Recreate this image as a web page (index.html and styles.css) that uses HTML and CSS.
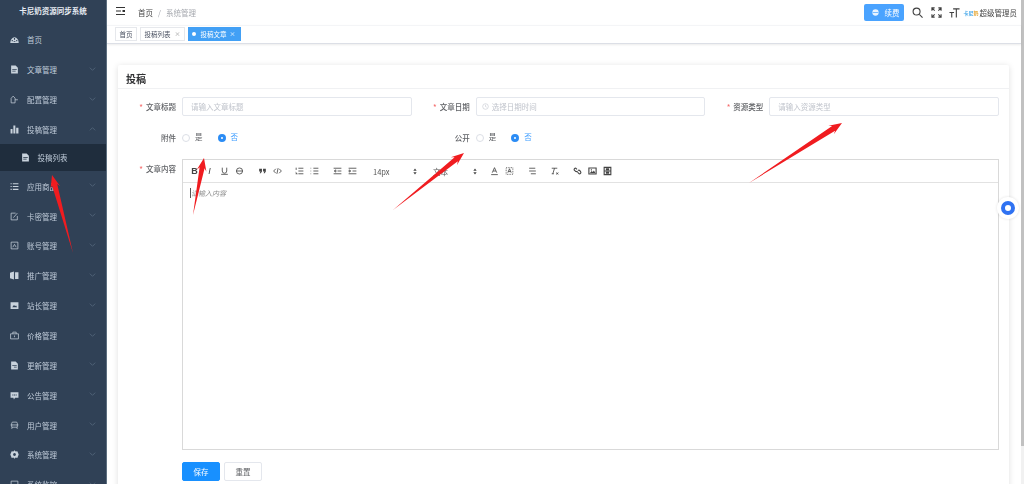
FILE: index.html
```html
<!DOCTYPE html>
<html lang="zh-CN">
<head>
<meta charset="utf-8">
<title>卡尼奶资源同步系统</title>
<link rel="stylesheet" href="styles.css">
</head>
<body>
<div class="app">
  <aside class="sidebar">
    <div class="brand">卡尼奶资源同步系统</div>
    <nav class="menu">
      <a class="item"><svg class="mi" viewBox="0 0 16 16"><path d="M.5 14A7.500 10 0 0 1 15.500 14z M7 5.500h2v3H7z M3 9h2v2H3z M11 9h2v2h-2z M6.500 11h3v1.500h-3z" fill-rule="evenodd"/></svg><span>首页</span></a>
      <a class="item"><svg class="mi" viewBox="0 0 16 16"><path d="M2 1h8l4 4v10H2z M4 7v1.500h8V7z M4 10v1.500h6V10z" fill-rule="evenodd"/></svg><span>文章管理</span><svg class="chev" viewBox="0 0 10 6"><path d="M1 1l4 4 4-4"/></svg></a>
      <a class="item"><svg class="mi line" viewBox="0 0 16 16"><path d="M2 14V6l3.500-4L9 5.500V14z M9 8.500h5"/></svg><span>配置管理</span><svg class="chev" viewBox="0 0 10 6"><path d="M1 1l4 4 4-4"/></svg></a>
      <a class="item"><svg class="mi" viewBox="0 0 16 16"><path d="M1 7h3.500v8H1z M6 1h3.500v14H6z M11 5h4v10h-4z"/></svg><span>投稿管理</span><svg class="chev" viewBox="0 0 10 6"><path d="M1 5l4-4 4 4"/></svg></a>
      <a class="item sub"><svg class="mi" viewBox="0 0 16 16"><path d="M2 1h8l4 4v10H2z M4 7v1.500h8V7z M4 10v1.500h6V10z" fill-rule="evenodd"/></svg><span>投稿列表</span></a>
      <a class="item"><svg class="mi" viewBox="0 0 16 16"><path d="M1 2h2v2H1z M5 2h10v2H5z M1 7h2v2H1z M5 7h10v2H5z M1 12h2v2H1z M5 12h10v2H5z"/></svg><span>应用商品</span><svg class="chev" viewBox="0 0 10 6"><path d="M1 1l4 4 4-4"/></svg></a>
      <a class="item"><svg class="mi line" viewBox="0 0 16 16"><path d="M10 2H2v12h11V7M6 10l7-8"/></svg><span>卡密管理</span><svg class="chev" viewBox="0 0 10 6"><path d="M1 1l4 4 4-4"/></svg></a>
      <a class="item"><svg class="mi line" viewBox="0 0 16 16"><path d="M2 2h12v12H2z M5 11l3-5 3 5"/></svg><span>账号管理</span><svg class="chev" viewBox="0 0 10 6"><path d="M1 1l4 4 4-4"/></svg></a>
      <a class="item"><svg class="mi" viewBox="0 0 16 16"><path d="M0 3l7-2v14l-7-2z M9 2h6v12H9z"/></svg><span>推广管理</span><svg class="chev" viewBox="0 0 10 6"><path d="M1 1l4 4 4-4"/></svg></a>
      <a class="item"><svg class="mi" viewBox="0 0 16 16"><path d="M1 2h14v12H1z M4 11l3-4 2 2 2-1 1.500 3z" fill-rule="evenodd"/></svg><span>站长管理</span><svg class="chev" viewBox="0 0 10 6"><path d="M1 1l4 4 4-4"/></svg></a>
      <a class="item"><svg class="mi line" viewBox="0 0 16 16"><path d="M1 5h14v9H1z M5 5V2h6v3 M8 8v3"/></svg><span>价格管理</span><svg class="chev" viewBox="0 0 10 6"><path d="M1 1l4 4 4-4"/></svg></a>
      <a class="item"><svg class="mi" viewBox="0 0 16 16"><path d="M2 1h8l4 4v10H2z M4 7v1.500h8V7z M7 10v1.500h5V10z" fill-rule="evenodd"/></svg><span>更新管理</span><svg class="chev" viewBox="0 0 10 6"><path d="M1 1l4 4 4-4"/></svg></a>
      <a class="item"><svg class="mi" viewBox="0 0 16 16"><path d="M1 2h14v10H9l-2 3-1-3H1z M4 6v2h2V6z M7 6v2h2V6z M10 6v2h2V6z" fill-rule="evenodd"/></svg><span>公告管理</span><svg class="chev" viewBox="0 0 10 6"><path d="M1 1l4 4 4-4"/></svg></a>
      <a class="item"><svg class="mi line" viewBox="0 0 16 16"><path d="M3 11V4q0-2 2-2h6q2 0 2 2v7 M1 7h14 M3 11h10 M4 11l-1 3 M12 11l1 3"/></svg><span>用户管理</span><svg class="chev" viewBox="0 0 10 6"><path d="M1 1l4 4 4-4"/></svg></a>
      <a class="item"><svg class="mi" viewBox="0 0 16 16"><path d="M8 .5l2 2 3-.5 1 2.500L15.500 8l-1.500 3.500-1 2.500-3-.5-2 2-2-2-3 .5-1-2.500L.5 8 2 4.500 3 2l3 .5z M8 5.500a2.500 2.500 0 1 0 .01 0z" fill-rule="evenodd"/></svg><span>系统管理</span><svg class="chev" viewBox="0 0 10 6"><path d="M1 1l4 4 4-4"/></svg></a>
      <a class="item"><svg class="mi line" viewBox="0 0 16 16"><path d="M2 2h12v9H2z M5 14h6"/></svg><span>系统监控</span><svg class="chev" viewBox="0 0 10 6"><path d="M1 1l4 4 4-4"/></svg></a>
    </nav>
  </aside>

  <div class="main">
    <header class="topbar">
      <svg class="burger" viewBox="0 0 9 8"><path d="M0 0h9v1H0z M0 3.500h5v1H0z M0 7h9v1H0z M6.500 3h2.500v2H6.500z"/></svg>
      <div class="crumbs"><span class="crumb-a">首页</span><span class="crumb-sep">/</span><span class="crumb-b">系统管理</span></div>
      <div class="top-right">
        <button class="renew"><svg class="renew-ic" viewBox="0 0 10 10"><circle cx="5" cy="5" r="4.500"/><path d="M1 4.500h8v1H1z" fill="#4aa3ff"/></svg>续费</button>
        <svg class="tool-ic search" viewBox="0 0 12 12"><circle cx="5" cy="5" r="3.800"/><path d="M8 8l3.500 3.500"/></svg>
        <svg class="tool-ic full" viewBox="0 0 12 12"><path d="M1 4V1h3 M8 1h3v3 M11 8v3H8 M4 11H1V8 M1 1l3 3 M11 1L8 4 M11 11L8 8 M1 11l3-3"/></svg>
        <svg class="tool-ic size" viewBox="0 0 12 12"><path d="M4.500 2h7 M8 2v9.500 M.5 6h5 M3 6v5.500"/></svg>
        <span class="logo-mini">卡尼<b>奶</b></span>
        <span class="admin">超级管理员</span>
      </div>
    </header>
    <div class="tags">
      <span class="tag">首页</span>
      <span class="tag">投稿列表<i class="x">×</i></span>
      <span class="tag active"><i class="dot"></i>投稿文章<i class="x">×</i></span>
    </div>

    <div class="content">
      <section class="card">
        <h2 class="card-title">投稿</h2>
        <form class="card-body">
          <div class="row three">
            <div class="field"><label class="lbl req">文章标题</label><div class="input">请输入文章标题</div></div>
            <div class="field"><label class="lbl req">文章日期</label><div class="input date"><svg class="clock" viewBox="0 0 10 10"><circle cx="5" cy="5" r="4"/><path d="M5 2.500V5l1.700 1"/></svg>选择日期时间</div></div>
            <div class="field"><label class="lbl req">资源类型</label><div class="input">请输入资源类型</div></div>
          </div>
          <div class="row three radios">
            <div class="field"><label class="lbl">附件</label><div class="radio-group"><span class="radio"><i class="ring"></i><span class="rtext">是</span></span><span class="radio on"><i class="ring"></i><span class="rtext">否</span></span></div></div>
            <div class="field"><label class="lbl">公开</label><div class="radio-group"><span class="radio"><i class="ring"></i><span class="rtext">是</span></span><span class="radio on"><i class="ring"></i><span class="rtext">否</span></span></div></div>
          </div>
          <div class="field editor-field">
            <label class="lbl req">文章内容</label>
            <div class="editor">
              <div class="toolbar">
                <div class="grp">
                  <b class="tb txt b">B</b>
                  <i class="tb txt it">I</i>
                  <svg class="tb" viewBox="0 0 18 18"><path d="M5 3v6a4 4 0 0 0 8 0V3 M3 15h12"/></svg>
                  <svg class="tb" viewBox="0 0 18 18"><circle cx="9" cy="9" r="5.500"/><path d="M3 9h12"/></svg>
                </div>
                <div class="grp">
                  <svg class="tb fill" viewBox="0 0 18 18"><path d="M3 5h5v5l-2 3H4l1.500-3H3z M10 5h5v5l-2 3h-2l1.500-3H10z"/></svg>
                  <svg class="tb" viewBox="0 0 18 18"><path d="M6 5L2 9l4 4 M12 5l4 4-4 4 M10 4l-2 10"/></svg>
                </div>
                <div class="grp">
                  <svg class="tb" viewBox="0 0 18 18"><path d="M7 4h9 M7 9h9 M7 14h9 M3 3v4 M2 14h3l-3-2.500"/></svg>
                  <svg class="tb" viewBox="0 0 18 18"><path d="M7 4h9 M7 9h9 M7 14h9 M2 4h1 M2 9h1 M2 14h1"/></svg>
                </div>
                <div class="grp">
                  <svg class="tb" viewBox="0 0 18 18"><path d="M2 4h14 M9 9h7 M2 14h14 M6 7L3 9l3 2z"/></svg>
                  <svg class="tb" viewBox="0 0 18 18"><path d="M2 4h14 M9 9h7 M2 14h14 M3 7l3 2-3 2z"/></svg>
                </div>
                <div class="picker"><span>14px</span><svg class="updown" viewBox="0 0 6 10"><path d="M3 .5L5.500 4h-5z M3 9.500L.5 6h5z"/></svg></div>
                <div class="picker"><span>文本</span><svg class="updown" viewBox="0 0 6 10"><path d="M3 .5L5.500 4h-5z M3 9.500L.5 6h5z"/></svg></div>
                <div class="grp">
                  <svg class="tb" viewBox="0 0 18 18"><path d="M5 12l4-9 4 9 M6.500 9h5 M3 15.500h12"/></svg>
                  <svg class="tb dotted" viewBox="0 0 18 18"><path d="M3 3h12v12H3z"/><path class="solid" d="M6 12l3-7 3 7 M7 10h4"/></svg>
                </div>
                <div class="grp">
                  <svg class="tb" viewBox="0 0 18 18"><path d="M3 4h11 M3 9h12 M6 14h9"/></svg>
                </div>
                <div class="grp">
                  <svg class="tb" viewBox="0 0 18 18"><path d="M4 4h10 M9 4L6 14 M4 14h4 M12 12l4 3 M16 12l-4 3"/></svg>
                </div>
                <div class="grp">
                  <svg class="tb thick" viewBox="0 0 18 18"><path d="M8 6L6 4a2.500 2.500 0 0 0-3 3l3 3a2.500 2.500 0 0 0 3-1 M10 8a2.500 2.500 0 0 1 3 0l2 3a2.500 2.500 0 0 1-3 3l-3-3"/></svg>
                  <svg class="tb thick" viewBox="0 0 18 18"><path d="M2.500 3.500h13v11h-13z"/><path class="sol" d="M4 13l3.500-4 2 2 2-3 3 5z M6 6h2v2H6z"/></svg>
                  <svg class="tb thick" viewBox="0 0 18 18"><path d="M3 2.500h12v13H3z M3 9h12"/><path class="sol" d="M6 4h6v4H6z M6 10h6v4H6z"/></svg>
                </div>
              </div>
              <div class="editor-body"><span class="caret"></span><em>请输入内容</em></div>
            </div>
          </div>
          <div class="actions">
            <button type="button" class="btn primary">保存</button>
            <button type="button" class="btn">重置</button>
          </div>
        </form>
      </section>
    </div>
  </div>
  <div class="scrollbar"><div class="thumb"></div></div>
</div>

<svg class="arrows" viewBox="0 0 1024 484">
  <polygon points="73,253 57.200,184 60.200,186.200 52,175 50.600,188.800 52,185.400"/>
  <polygon points="193,215 204.600,168.300 206.400,171.700 204,158 196.600,169.900 199.600,167.300"/>
  <polygon points="393,210 457.800,161.300 457,165 464,153 450.800,157.200 454.600,157.300"/>
  <polygon points="749,183 835.100,130.700 833.800,134.200 842,123 828.400,125.800 832.100,126.100"/>
</svg>

<div class="float"><i></i></div>
</body>
</html>
```
FILE: styles.css
```css
* { box-sizing: border-box; }
html, body { margin: 0; height: 100%; overflow: hidden; background: #fff; }
body { font-family: "Noto Sans CJK SC", "Liberation Sans", sans-serif; font-size: 7.5px; color: #606266; }
button { font-family: inherit; }

.app { display: flex; width: 1024px; height: 484px; overflow: hidden; filter: blur(.3px); }

/* sidebar */
.sidebar { width: 107px; flex: none; background: #304156; border-right: 1px solid #5d6f80; overflow: hidden; color: #bfcbd9; }
.brand { height: 25px; line-height: 22px; text-align: center; font-weight: 700; color: #e6ebf2; font-size: 7.5px; }
.menu { display: flex; flex-direction: column; }
.item { height: 29.85px; flex: none; display: flex; align-items: center; padding-left: 10px; position: relative; }
.item span { margin-left: 8px; }
.mi { width: 9px; height: 9px; fill: #c8d2dc; flex: none; }
.mi.line { fill: none; stroke: #c8d2dc; stroke-width: 1.300; }
.chev { position: absolute; left: 89px; top: 12px; width: 7px; height: 4px; fill: none; stroke: #5f7286; stroke-width: 1; }
.item.sub { height: 27px; background: #1f2d3d; padding-left: 20.500px; }

/* main */
.main { flex: 1; min-width: 0; display: flex; flex-direction: column; }
.topbar { height: 25px; flex: none; display: flex; align-items: center; padding-left: 9px; }
.burger { width: 9px; height: 8px; fill: #333; margin-top: -3px; }
.crumbs { margin-left: 13px; display: flex; gap: 5px; }
.crumb-a { color: #444; }
.crumb-sep, .crumb-b { color: #a5a8ae; }
.top-right { margin-left: auto; display: flex; align-items: center; padding-right: 4px; }
.renew { width: 40px; height: 17px; border: 0; border-radius: 2px; background: #4aa3ff; color: #fff; font-size: 7.500px; display: flex; align-items: center; gap: 6px; padding: 0 0 0 8px; }
.renew-ic { width: 7px; height: 7px; fill: #e8f3ff; }
.tool-ic { width: 11px; height: 11px; fill: none; stroke: #404040; stroke-width: 1.200; flex: none; }
.search { margin-left: 8px; }
.full { margin-left: 8px; }
.size { margin-left: 7px; }
.logo-mini { margin-left: 4px; width: 15px; font-size: 5px; white-space: nowrap; font-weight: 700; color: #41a5e8; }
.logo-mini b { color: #e8b04a; }
.admin { margin-left: 1px; color: #444; font-size: 7.500px; white-space: nowrap; }

.tags { height: 19px; flex: none; display: flex; align-items: flex-start; gap: 3px; padding: 1px 0 0 8px; border-bottom: 1px solid #dcdfe6; box-shadow: 0 1px 2px rgba(0,0,0,.08); border-top: 1px solid #f4f5f7; position: relative; }
.tag { height: 14px; line-height: 12px; padding: 0 3.500px; border: 1px solid #e6e8ec; color: #495060; font-size: 6.500px; white-space: nowrap; display: flex; align-items: center; }
.tag .x { font-style: normal; margin-left: 4px; color: #999; font-size: 6px; }
.tag.active { background: #42a0f5; border-color: #42a0f5; color: #fff; padding: 0 4px 0 2.500px; }
.tag.active .x { color: #fff; margin-left: 3px; }
.dot { width: 4px; height: 4px; border-radius: 50%; background: #fff; margin-right: 5px; }

.content { flex: 1; min-height: 0; padding: 21px 12px 0 11px; overflow: hidden; }
.card { background: #fff; border-radius: 2px; box-shadow: 0 1px 6px rgba(0,0,0,.13); height: 440px; }
.card-title { margin: 0; height: 24px; line-height: 27px; padding-left: 8px; font-size: 10px; font-weight: 700; color: #303133; border-bottom: 1px solid #f0f1f3; }
.card-body { padding: 8px 10px 0 0; display: block; }

.row.three { display: grid; grid-template-columns: repeat(3, 1fr); }
.field { display: flex; align-items: flex-start; }
.lbl { width: 64px; flex: none; padding-right: 6px; text-align: right; line-height: 20px; color: #606266; font-weight: 500; }
.req::before { content: "*"; color: #f56c6c; margin-right: 3px; }
.input { flex: 1; height: 19px; line-height: 18px; border: 1px solid #e4e7ed; border-radius: 2px; padding-left: 8px; color: #c0c4cc; display: flex; align-items: center; }
.input.date { padding-left: 5px; }
.clock { width: 7px; height: 7px; margin-right: 3px; fill: none; stroke: #c0c4cc; stroke-width: .8; }

.radios { margin-top: 11px; height: 20px; }
.radio-group { display: flex; height: 20px; align-items: center; gap: 15px; }
.radio { display: flex; align-items: center; gap: 5px; color: #606266; }
.rtext { line-height: 8px; padding-bottom: 2px; }
.ring { width: 8px; height: 8px; border-radius: 50%; border: 1px solid #dcdfe6; background: #fff; }
.radio.on { color: #409eff; }
.radio.on .ring { background: #fff; border: 3px solid #2b8cf5; }

.editor-field { margin-top: 11px; }
.editor { flex: 1; height: 291px; border: 1px solid #d9d9d9; display: flex; flex-direction: column; }
.toolbar { height: 23px; flex: none; border-bottom: 1px solid #e2e2e2; display: flex; align-items: center; padding-left: 4px; }
.grp { display: flex; margin-right: 7.500px; }
.tb { width: 15px; height: 10px; flex: none; fill: none; stroke: #444; stroke-width: 1.500; text-align: center; }
.tb.thick { stroke-width: 2; }
.tb.txt { line-height: 10px; font-size: 9px; color: #444; font-family: "Liberation Sans", sans-serif; }
.tb.fill { fill: #444; stroke: none; }
.tb.dotted path { stroke-dasharray: 1.500 1.500; }
.tb.dotted .solid { stroke-dasharray: none; }
.tb .sol { fill: #444; stroke: none; }
.picker { width: 53px; margin-right: 7px; display: flex; justify-content: space-between; align-items: center; padding: 0 3px 0 6px; color: #555; }
.updown { width: 4px; height: 7px; fill: #444; }
.editor-body { flex: 1; padding: 5px 7px; color: #8f8f8f; display: flex; align-items: flex-start; line-height: 10px; font-size: 7px; }
.caret { width: 1px; height: 10px; background: #555; flex: none; }
.editor-body em { font-style: italic; }

.actions { display: flex; gap: 4px; margin: 12px 0 0 64px; }
.btn { width: 38px; height: 19px; padding: 0; border: 1px solid #e4e7ed; border-radius: 2px; background: #fff; color: #606266; font-size: 7.500px; }
.btn.primary { background: #1890ff; border-color: #1890ff; color: #fff; }

.scrollbar { width: 3px; flex: none; background: #f1f1f1; }
.thumb { height: 446px; background: #c1c1c1; }

/* overlays */
.arrows { position: absolute; left: 0; top: 0; width: 1024px; height: 484px; fill: #f01c20; pointer-events: none; }
.float { position: absolute; left: 997px; top: 197px; width: 22px; height: 22px; border-radius: 50%; background: #fff; box-shadow: 0 0 3px rgba(0,0,0,.12); display: flex; align-items: center; justify-content: center; }
.float i { width: 14px; height: 14px; border-radius: 50%; border: 4px solid #2f72f2; background: #fff; }
```
